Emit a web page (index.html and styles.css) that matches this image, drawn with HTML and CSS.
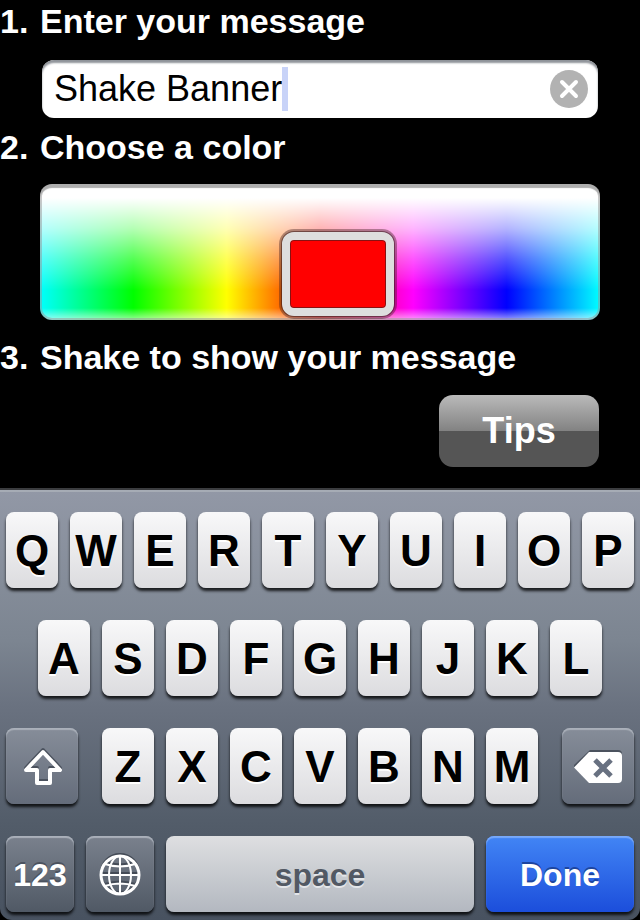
FILE: index.html
```
<!DOCTYPE html>
<html lang="en">
<head>
  <meta charset="UTF-8" />
  <meta name="viewport" content="width=device-width, initial-scale=1" />
  <title>Shake Banner</title>
  <link rel="stylesheet" href="styles.css">
</head>
<body>
  <main>
    <!-- Message -->
    <h2 class="step"><span class="num">1.</span><label for="message">Enter your message</label></h2>
    <div class="field">
      <input type="text" id="message" class="message" value="Shake Banner">
      <span class="caret"></span>
      <button type="button" class="clear" aria-label="Clear message">
        <svg viewBox="0 0 38 38" width="38" height="38">
          <circle cx="19" cy="19" r="19" fill="#b2b2b2"/>
          <path d="M12 12L26 26M26 12L12 26" stroke="#fff" stroke-width="4" stroke-linecap="round"/>
        </svg>
      </button>
    </div>

    <!-- Color -->
    <h2 class="step"><span class="num">2.</span><label for="color">Choose a color</label></h2>
    <input type="range" id="color" class="picker" min="0" max="100" value="54">

    <!-- Shake -->
    <h2 class="step"><span class="num">3.</span><span>Shake to show your message</span></h2>
    <div class="actions">
      <button type="button" class="tips">Tips</button>
    </div>
  </main>

  <section class="keyboard" aria-label="Keyboard">
    <div class="row">
      <button type="button" class="key">Q</button>
      <button type="button" class="key">W</button>
      <button type="button" class="key">E</button>
      <button type="button" class="key">R</button>
      <button type="button" class="key">T</button>
      <button type="button" class="key">Y</button>
      <button type="button" class="key">U</button>
      <button type="button" class="key">I</button>
      <button type="button" class="key">O</button>
      <button type="button" class="key">P</button>
    </div>
    <div class="row middle">
      <button type="button" class="key">A</button>
      <button type="button" class="key">S</button>
      <button type="button" class="key">D</button>
      <button type="button" class="key">F</button>
      <button type="button" class="key">G</button>
      <button type="button" class="key">H</button>
      <button type="button" class="key">J</button>
      <button type="button" class="key">K</button>
      <button type="button" class="key">L</button>
    </div>
    <div class="row">
      <button type="button" class="key dark shift" aria-label="Shift">
        <svg viewBox="0 0 44 44" width="44" height="44" fill="none" stroke-width="4" stroke-linejoin="round">
          <path d="M23 5L40 23H30V36H17V23H6Z" stroke="#4b525e"/>
          <path d="M23 7L40 25H30V38H17V25H6Z" stroke="#fff"/>
        </svg>
      </button>
      <button type="button" class="key">Z</button>
      <button type="button" class="key">X</button>
      <button type="button" class="key">C</button>
      <button type="button" class="key">V</button>
      <button type="button" class="key">B</button>
      <button type="button" class="key">N</button>
      <button type="button" class="key">M</button>
      <button type="button" class="key dark delete" aria-label="Delete">
        <svg viewBox="0 0 48 34" width="48" height="34">
          <path d="M0 15L16 0H44Q48 0 48 4V28Q48 32 44 32H16L0 17Z" fill="#4b525e"/>
          <path d="M0 17.500L15 2H44Q48 2 48 6V29Q48 33 44 33H15Z" fill="#fff"/>
          <path d="M21 10L37 26M37 10L21 26" stroke="#687181" stroke-width="5"/>
        </svg>
      </button>
    </div>
    <div class="row">
      <button type="button" class="key dark small">123</button>
      <button type="button" class="key dark small" aria-label="Next keyboard">
        <svg viewBox="0 0 42 44" width="42" height="44" fill="none" stroke-width="2">
          <g stroke="#444b56">
            <circle cx="21" cy="20" r="19"/>
            <path d="M2 20H40M6 9Q21 14 36 9M6 31Q21 26 36 31"/>
          </g>
          <g stroke="#fff">
            <circle cx="21" cy="22" r="19" stroke-width="3"/>
            <ellipse cx="21" cy="22" rx="11" ry="19"/>
            <path d="M21 3V41M2 22H40M6 11Q21 16 36 11M6 33Q21 28 36 33"/>
          </g>
        </svg>
      </button>
      <button type="button" class="key space">space</button>
      <button type="button" class="key done">Done</button>
    </div>
  </section>
</body>
</html>
```
FILE: styles.css
```
* { box-sizing: border-box; }
body {
  font-family: "Liberation Sans", Arial, sans-serif;
  margin: 0;
  background: #000;
  color: white;
}
button {
  font-family: inherit;
  border: none;
  padding: 0;
  cursor: pointer;
}
main {
  padding-top: 1px;
}
.step {
  display: flex;
  margin: 0;
  font-size: 34px;
  line-height: 40px;
}
.num {
  width: 40px;
}
.field {
  display: flex;
  align-items: center;
  height: 58px;
  margin: 19px 42px 9px;
  padding: 0 10px 0 12px;
  border-radius: 12px;
  background: white;
  box-shadow: inset 0 3px 2px #8f9399;
}
.message {
  field-sizing: content;
  min-width: 0;
  padding: 0;
  border: none;
  outline: none;
  background: none;
  color: black;
  font-family: inherit;
  font-size: 36px;
}
.caret {
  width: 6px;
  height: 44px;
  background: #c8d3f8;
}
.clear {
  display: flex;
  margin-left: auto;
  border-radius: 50%;
  background: none;
}

/* Color picker */
.picker {
  -webkit-appearance: none;
  appearance: none;
  display: block;
  width: calc(100% - 80px);
  height: 136px;
  margin: 17px 40px;
  padding-top: 44px;
  border-radius: 12px;
  background:
    linear-gradient(to bottom, white 14px, rgba(255,255,255,0.7) 45px, rgba(255,255,255,0.33) 75px, rgba(255,255,255,0) 106px, rgba(255,255,255,0) 124px, rgba(255,255,255,0.6)),
    linear-gradient(to right, #0ff, #0f0, #ff0, #f00, #f0f, #00f, #0ff);
  box-shadow: inset 0 4px 1px #aeaeae, inset 0 0 0 2px rgba(150,150,150,0.5);
}
.picker::-webkit-slider-thumb {
  -webkit-appearance: none;
  width: 112px;
  height: 84px;
  border: 8px solid #dedede;
  border-radius: 12px;
  background: #f00;
  box-shadow: 0 0 0 1px rgba(50,20,20,0.5), 0 0 0 3px rgba(60,30,30,0.4), inset 0 0 0 1px #811;
}

.actions {
  display: flex;
  justify-content: flex-end;
  padding: 18px 41px 21px;
}
.tips {
  width: 160px;
  height: 72px;
  border-radius: 14px;
  background: linear-gradient(#bababa, #828282 50%, #555 50%);
  color: white;
  font-size: 36px;
  font-weight: bold;
}

/* Keyboard */
.keyboard {
  display: flex;
  flex-direction: column;
  gap: 32px;
  padding: 22px 6px 8px;
  border-top: 2px solid #3b3c3f;
  border-radius: 0 0 12px 12px;
  background: linear-gradient(#9298a6, #7c8591 35%, #6a7280 50%, #525c69 78%, #485260);
  box-shadow: inset 0 2px #a6acb5;
}
.row {
  display: flex;
  gap: 12px;
}
.middle {
  padding: 0 32px;
}
.key {
  display: flex;
  flex: 52 1 0;
  align-items: center;
  justify-content: center;
  min-width: 0;
  height: 76px;
  padding-top: 2px;
  border-radius: 8px;
  background: linear-gradient(#f8f8f9, #dcdcdf);
  box-shadow: 0 3px 3px rgba(0,0,0,0.8);
  color: black;
  font-size: 44px;
  font-weight: bold;
  text-shadow: 0 2px white;
}
.dark {
  background: linear-gradient(#868d99, #646c7a);
  box-shadow: inset 0 2px 1px #aab0ba, 0 3px 3px rgba(0,0,0,0.8);
  color: white;
  font-size: 32px;
  text-shadow: 0 -2px #4b525e;
}
.shift {
  flex-grow: 72;
  margin-right: 12px;
}
.delete {
  flex-grow: 72;
  margin-left: 12px;
}
.small {
  flex-grow: 68;
  background: linear-gradient(#7a818d, #505965);
}
.space {
  flex-grow: 308;
  background: linear-gradient(#dedfe1, #b3b8c0);
  color: #525964;
  font-size: 32px;
  text-shadow: 0 2px #e4e6e9;
}
.done {
  flex-grow: 148;
  background: linear-gradient(#4285f5, #1c4edb);
  box-shadow: inset 0 2px 1px #78a9fa, 0 3px 3px rgba(0,0,0,0.8);
  color: white;
  font-size: 32px;
  text-shadow: 0 -2px #1d459f;
}
```
